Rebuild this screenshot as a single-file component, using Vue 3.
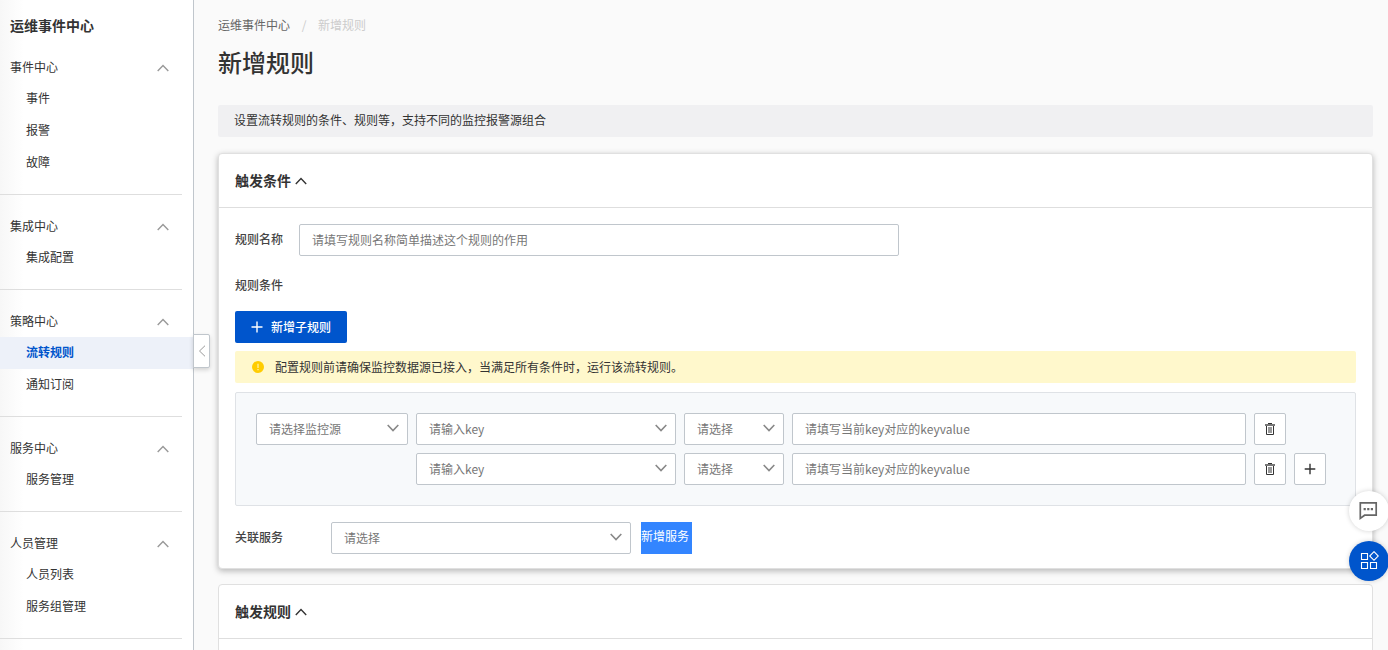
<script setup>
const groups = [
  { title: '事件中心', items: ['事件', '报警', '故障'] },
  { title: '集成中心', items: ['集成配置'] },
  { title: '策略中心', items: ['流转规则', '通知订阅'] },
  { title: '服务中心', items: ['服务管理'] },
  { title: '人员管理', items: ['人员列表', '服务组管理'] }
]
const active = '流转规则'
const conditions = [
  { id: 1, source: true, add: false },
  { id: 2, source: false, add: true }
]
</script>

<template>
  <div class="app">
    <aside class="sidebar">
      <h2 class="brand">运维事件中心</h2>
      <nav>
        <section v-for="g in groups" :key="g.title" class="group">
          <button class="group-head" type="button">
            <span>{{ g.title }}</span>
            <svg width="12" height="8" viewBox="0 0 12 8"><path d="M0.7 7 6 1.5 11.3 7" /></svg>
          </button>
          <a v-for="i in g.items" :key="i" href="#" class="item" :class="{ active: i === active }">{{ i }}</a>
        </section>
      </nav>
      <button class="collapse" type="button" aria-label="收起">
        <svg width="8" height="12" viewBox="0 0 8 12"><path d="M7 0.7 1.5 6 7 11.3" /></svg>
      </button>
    </aside>

    <main class="main">
      <nav class="crumbs">
        <a href="#">运维事件中心</a><span class="slash">/</span><span class="current">新增规则</span>
      </nav>
      <h1>新增规则</h1>
      <p class="notice">设置流转规则的条件、规则等，支持不同的监控报警源组合</p>

      <section class="card raised">
        <header class="card-head">
          <h3>触发条件</h3>
          <svg width="12" height="8" viewBox="0 0 12 8"><path d="M0.8 7 6 1.6 11.2 7" /></svg>
        </header>
        <div class="card-body">
          <div class="row">
            <label for="rule-name">规则名称</label>
            <input id="rule-name" class="field name" type="text" placeholder="请填写规则名称简单描述这个规则的作用" />
          </div>
          <div class="label-line">规则条件</div>
          <button class="primary" type="button">
            <svg width="12" height="12" viewBox="0 0 12 12"><path d="M6 0.5V11.5M0.5 6H11.5" /></svg>
            <span>新增子规则</span>
          </button>
          <div class="warning">
            <svg width="12" height="12" viewBox="0 0 12 12">
              <circle cx="6" cy="6" r="6" fill="#fc0" />
              <path d="M6 2.8V7M6 8V9.2" stroke="#fff3b0" stroke-width="1.2" />
            </svg>
            <span>配置规则前请确保监控数据源已接入，当满足所有条件时，运行该流转规则。</span>
          </div>
          <div class="panel">
            <div v-for="c in conditions" :key="c.id" class="condition">
              <div v-if="c.source" class="select source">
                <select aria-label="监控源"><option>请选择监控源</option></select>
                <svg width="12" height="8" viewBox="0 0 12 8"><path d="M0.7 1 6 6.5 11.3 1" /></svg>
              </div>
              <div class="select key">
                <select aria-label="key"><option>请输入key</option></select>
                <svg width="12" height="8" viewBox="0 0 12 8"><path d="M0.7 1 6 6.5 11.3 1" /></svg>
              </div>
              <div class="select">
                <select aria-label="条件"><option>请选择</option></select>
                <svg width="12" height="8" viewBox="0 0 12 8"><path d="M0.7 1 6 6.5 11.3 1" /></svg>
              </div>
              <input class="field" type="text" aria-label="keyvalue" placeholder="请填写当前key对应的keyvalue" />
              <button class="icon-btn" type="button" aria-label="删除">
                <svg width="12" height="14" viewBox="0 0 12 14">
                  <path d="M4 1.5H8" stroke="#333" stroke-width="1" />
                  <path d="M1 3H11" stroke="#777" stroke-width="2" />
                  <path d="M2.5 4V12.5H9.5V4" fill="none" stroke="#333" stroke-width="1" />
                  <path d="M4 5H8V11H4Z" fill="#999" />
                </svg>
              </button>
              <button v-if="c.add" class="icon-btn" type="button" aria-label="添加">
                <svg width="12" height="12" viewBox="0 0 12 12"><path d="M6 0.7V11.3M0.7 6H11.3" stroke="#333" stroke-width="1.4" /></svg>
              </button>
            </div>
          </div>
          <div class="row">
            <label for="service" class="wide">关联服务</label>
            <div class="select service">
              <select id="service"><option>请选择</option></select>
              <svg width="12" height="8" viewBox="0 0 12 8"><path d="M0.7 1 6 6.5 11.3 1" /></svg>
            </div>
            <button class="add-service" type="button">新增服务</button>
          </div>
        </div>
      </section>

      <section class="card">
        <header class="card-head">
          <h3>触发规则</h3>
          <svg width="12" height="8" viewBox="0 0 12 8"><path d="M0.8 7 6 1.6 11.2 7" /></svg>
        </header>
        <div class="card-body"></div>
      </section>
    </main>

    <div class="floats">
      <button class="float" type="button" aria-label="反馈">
        <svg width="20" height="20" viewBox="0 0 20 20" fill="none">
          <path d="M1.3 1.8H17.2V14.2H5.6L1.3 17.4Z" stroke="#666" stroke-width="1.7" />
          <path d="M4.6 8.2H6.8M8.2 8.2H10.4M11.8 8.2H14" stroke="#666" stroke-width="2.2" />
        </svg>
      </button>
      <button class="float blue" type="button" aria-label="应用">
        <svg width="20" height="20" viewBox="0 0 20 20" fill="none" stroke="#fff" stroke-width="1.1">
          <path d="M2.5 2.5H8.5V8.5H2.5ZM2.5 11.5H8.5V17.5H2.5ZM11.5 11.5H17.5V17.5H11.5ZM15 0.7 19.3 5 15 9.3 10.7 5Z" />
        </svg>
      </button>
    </div>
  </div>
</template>

<style>
body {
  background: #fafafa;
}
</style>

<style scoped>
* {
  box-sizing: border-box;
}
.app {
  display: flex;
  height: 100vh;
  overflow: hidden;
  color: #333;
  font: 12px/18px "Noto Sans CJK SC", sans-serif;
}
button,
input,
select {
  font: inherit;
  color: inherit;
  margin: 0;
}
button {
  cursor: pointer;
}
svg {
  display: block;
  flex: none;
  fill: none;
}
a {
  color: inherit;
  text-decoration: none;
}
.sidebar {
  position: relative;
  flex: none;
  width: 194px;
  background: linear-gradient(to right, #f7f7f7, #fff 24px);
  border-right: 1px solid #c0c6cc;
}
.brand {
  margin: 0;
  padding: 15px 10px 16px;
  font-size: 14px;
  line-height: 20px;
  font-weight: 700;
}
.group {
  padding-bottom: 15px;
  margin-bottom: 15px;
  border-bottom: 1px solid transparent;
  border-image: linear-gradient(to right, #dedede 181px, transparent 181px) 1;
}
.group-head {
  display: flex;
  align-items: center;
  justify-content: space-between;
  width: 100%;
  height: 32px;
  padding: 0 24px 0 10px;
  border: 0;
  background: none;
}
.group-head span,
.primary span,
.warning span {
  padding-bottom: 1px;
}
.group-head svg {
  margin-top: 2px;
  stroke: #999;
  stroke-width: 1.4;
}
.item {
  display: block;
  padding: 0 0 2px 26px;
  line-height: 30px;
}
.item.active {
  background: #edf1f9;
  color: #0055cc;
  font-weight: 700;
}
.collapse {
  position: absolute;
  left: 193px;
  top: 334px;
  width: 17px;
  height: 34px;
  display: flex;
  align-items: center;
  justify-content: center;
  padding: 0;
  background: #fff;
  border: 1px solid #c0c6cc;
  border-radius: 0 2px 2px 0;
  box-shadow: 0 2px 4px rgba(0, 0, 0, 0.16);
}
.collapse svg {
  stroke: #999;
}
.main {
  flex: 1;
  min-width: 0;
  padding: 15px 15px 0 24px;
}
.crumbs {
  display: flex;
  line-height: 20px;
  color: #666;
}
.slash {
  width: 28px;
  text-align: center;
  color: #ccc;
}
.current {
  color: #ccc;
}
h1 {
  margin: 9px 0 25px;
  font-size: 24px;
  line-height: 36px;
  font-weight: 500;
}
.notice {
  margin: 0 0 16px;
  padding: 0 16px 2px;
  line-height: 30px;
  background: #f0f0f2;
  border-radius: 2px;
}
.card {
  margin-bottom: 15px;
  background: #fff;
  border: 1px solid #e0e0e0;
  border-radius: 4px;
}
.raised {
  box-shadow: 0 2px 6px rgba(0, 0, 0, 0.28);
}
.card-head {
  display: flex;
  align-items: center;
  gap: 4px;
  height: 54px;
  padding: 0 16px;
  border-bottom: 1px solid #dedede;
}
.card-head h3 {
  margin: 0;
  padding-bottom: 2px;
  font-size: 14px;
  font-weight: 700;
}
.card-head svg {
  stroke: #333;
  stroke-width: 1.4;
}
.card-body {
  padding: 16px 16px 14px;
}
.row {
  display: flex;
  align-items: center;
}
.row label {
  width: 64px;
  padding-bottom: 2px;
  color: #444;
  font-weight: 500;
}
.row .wide {
  width: 96px;
}
.label-line {
  padding: 19px 0 16px;
  line-height: 20px;
  color: #444;
  font-weight: 500;
}
.field,
.select select {
  width: 100%;
  height: 32px;
  padding: 0 12px;
  background: #fff;
  border: 1px solid #c0c6cc;
  border-radius: 2px;
  outline: 0;
}
.field {
  padding-bottom: 2px;
}
.field::placeholder {
  color: #777;
  opacity: 1;
}
.field.name {
  width: 600px;
}
.select {
  display: grid;
  align-items: center;
}
.select select {
  grid-area: 1 / 1;
  appearance: none;
  color: #777;
}
.select svg {
  grid-area: 1 / 1;
  justify-self: end;
  margin: 0 9px 2px 0;
  stroke: #888;
  stroke-width: 1.6;
  pointer-events: none;
}
.primary {
  display: flex;
  align-items: center;
  gap: 8px;
  height: 32px;
  padding: 0 16px;
  border: 0;
  border-radius: 2px;
  background: #0055cc;
  color: #fff;
  font-weight: 500;
}
.primary svg {
  stroke: #fff;
  stroke-width: 1.4;
}
.warning {
  display: flex;
  align-items: center;
  gap: 11px;
  height: 32px;
  margin: 8px 0 9px;
  padding: 0 17px;
  background: #fff8cc;
  border-radius: 2px;
}
.panel {
  display: grid;
  gap: 8px;
  margin-bottom: 16px;
  padding: 20px 29px 20px 20px;
  background: #f7f9fb;
  border: 1px solid #dfe2e6;
  border-radius: 2px;
}
.condition {
  display: grid;
  grid-template-columns: 152px 260px 100px 1fr 32px 32px;
  gap: 8px;
}
.key {
  grid-column: 2;
}
.icon-btn {
  display: flex;
  align-items: center;
  justify-content: center;
  height: 32px;
  padding: 0;
  background: #fff;
  border: 1px solid #c0c6cc;
  border-radius: 2px;
}
.service {
  width: 300px;
}
.add-service {
  width: 51px;
  height: 32px;
  margin-left: 10px;
  padding: 0 3px 4px 0;
  border: 0;
  background: #3385ff;
  color: #fff;
}
.floats {
  position: fixed;
  right: -1px;
  top: 491px;
  display: grid;
  gap: 10px;
}
.float {
  display: flex;
  align-items: center;
  justify-content: center;
  width: 40px;
  height: 40px;
  padding: 0;
  border: 0;
  border-radius: 50%;
  background: #fff;
  box-shadow: 0 0 5px rgba(0, 0, 0, 0.18);
}
.float.blue {
  background: #0055cc;
}
</style>
